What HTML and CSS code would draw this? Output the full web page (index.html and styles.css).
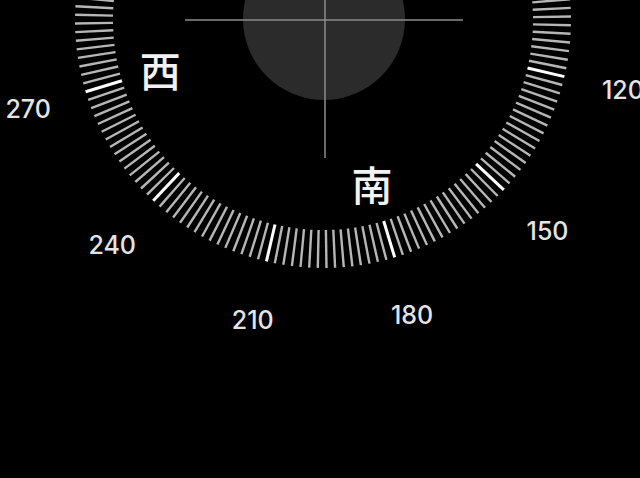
FILE: index.html
```html
<html lang="zh">
<head>
    <meta charset="UTF-8">
    <meta name="viewport" content="width=device-width, initial-scale=1.0">
    <title>指南针</title>
    <link rel="stylesheet" href="styles.css">
</head>
<body>
    <div class="compass">
        <svg class="dial" viewBox="0 0 640 478" width="640" height="478">
            <circle class="level" cx="324" cy="19" r="81"></circle>
            <line class="cross" x1="185" y1="20" x2="463" y2="20"></line>
            <line class="cross" x1="325" y1="0" x2="325" y2="158"></line>
            <g id="ticks"></g>
            <g id="degrees"></g>
            <g id="cardinals"></g>
        </svg>
    </div>

    <script>
        const cx = 323;
        const cy = 20;
        const heading = 16.8;
        const ns = 'http://www.w3.org/2000/svg';

        function point(deg, r) {
            const a = (deg - heading) * Math.PI / 180;
            return [cx + r * Math.sin(a), cy - r * Math.cos(a)];
        }

        function addText(group, cls, deg, r, text) {
            const [x, y] = point(deg, r);
            if (y < 20) return;
            const t = document.createElementNS(ns, 'text');
            t.setAttribute('class', cls);
            t.setAttribute('x', x.toFixed(1));
            t.setAttribute('y', y.toFixed(1));
            t.textContent = text;
            group.appendChild(t);
        }

        const ticks = document.getElementById('ticks');
        for (let d = 0; d < 360; d += 2) {
            const [x1, y1] = point(d, 210);
            const [x2, y2] = point(d, 248);
            const line = document.createElementNS(ns, 'line');
            line.setAttribute('class', d % 30 === 0 ? 'tick major' : 'tick');
            line.setAttribute('x1', x1.toFixed(1));
            line.setAttribute('y1', y1.toFixed(1));
            line.setAttribute('x2', x2.toFixed(1));
            line.setAttribute('y2', y2.toFixed(1));
            ticks.appendChild(line);
        }

        const degrees = document.getElementById('degrees');
        for (let d = 0; d < 360; d += 30) {
            addText(degrees, 'degree', d, 308, d);
        }

        const cardinals = document.getElementById('cardinals');
        ['北', '东', '南', '西'].forEach((name, i) => {
            addText(cardinals, 'cardinal', i * 90, 170, name);
        });
    </script>
</body>
</html>
```

FILE: styles.css
```css
body {
    background-color: #000000;
    margin: 0;
    padding: 0;
    overflow: hidden;
}
.compass {
    width: 640px;
    height: 478px;
}
.dial {
    display: block;
}
.level {
    fill: #2b2b2b;
}
.cross {
    stroke: #8c8c8c;
    stroke-width: 1.5;
}
.tick {
    stroke: #b6b6b6;
    stroke-width: 2.4;
}
.tick.major {
    stroke: #ffffff;
    stroke-width: 3;
}
.degree {
    fill: #e4e4e4;
    font-family: "Inter", "Liberation Sans", sans-serif;
    font-size: 25px;
    font-weight: 500;
    text-anchor: middle;
    dominant-baseline: central;
}
.cardinal {
    fill: #f2f2f2;
    font-family: "Noto Sans CJK SC", sans-serif;
    font-size: 41px;
    font-weight: 500;
    text-anchor: middle;
    dominant-baseline: central;
}
```
